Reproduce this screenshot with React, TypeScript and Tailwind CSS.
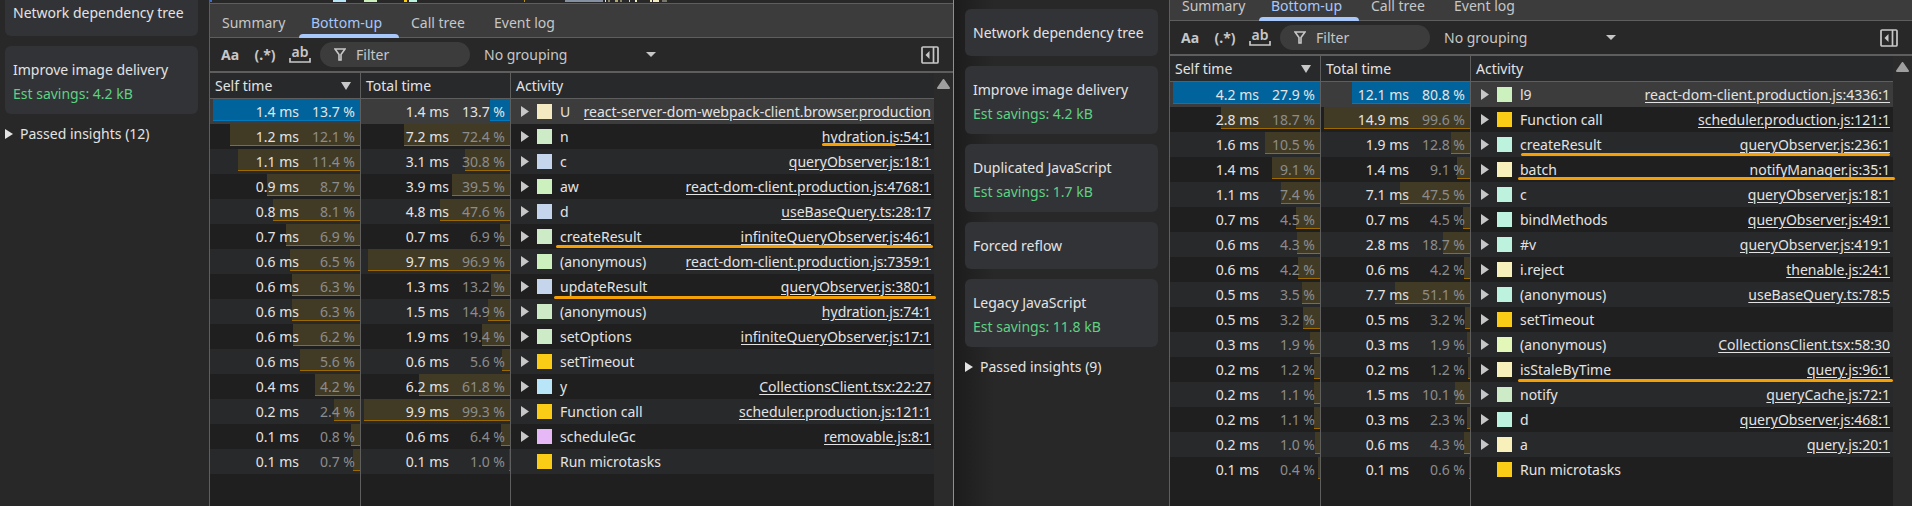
import * as React from "react";
import clsx from "clsx";

type Row = {
  self: string;
  selfPct: number;
  total: string;
  totalPct: number;
  color: string;
  name: string;
  link?: string;
  leaf?: boolean;
  mark?: string;
};

type Insight = {
  title: string;
  savings?: string;
};

const SAND = "bg-[#f3eac2]";
const CREAM = "bg-[#f8f0ba]";
const GREEN = "bg-[#cdebc7]";
const LIME = "bg-[#cdf1be]";
const PEAR = "bg-[#e3f8b8]";
const MINT = "bg-[#bdf2df]";
const BLUE = "bg-[#c5d5ec]";
const SKY = "bg-[#b8e6f8]";
const PINK = "bg-[#e6b8f6]";
const YELLOW = "bg-[#facc15]";

const beforeRows: Row[] = [
  { self: "1.4", selfPct: 13.7, total: "1.4", totalPct: 13.7, color: SAND, name: "U", link: "react-server-dom-webpack-client.browser.production" },
  { self: "1.2", selfPct: 12.1, total: "7.2", totalPct: 72.4, color: GREEN, name: "n", link: "hydration.js:54:1", mark: "right-[38px] w-[74px] bottom-[3px]" },
  { self: "1.1", selfPct: 11.4, total: "3.1", totalPct: 30.8, color: BLUE, name: "c", link: "queryObserver.js:18:1" },
  { self: "0.9", selfPct: 8.7, total: "3.9", totalPct: 39.5, color: LIME, name: "aw", link: "react-dom-client.production.js:4768:1" },
  { self: "0.8", selfPct: 8.1, total: "4.8", totalPct: 47.6, color: BLUE, name: "d", link: "useBaseQuery.ts:28:17" },
  { self: "0.7", selfPct: 6.9, total: "0.7", totalPct: 6.9, color: GREEN, name: "createResult", link: "infiniteQueryObserver.js:46:1", mark: "left-[45px] right-px bottom-px" },
  { self: "0.6", selfPct: 6.5, total: "9.7", totalPct: 96.9, color: LIME, name: "(anonymous)", link: "react-dom-client.production.js:7359:1" },
  { self: "0.6", selfPct: 6.3, total: "1.3", totalPct: 13.2, color: BLUE, name: "updateResult", link: "queryObserver.js:380:1", mark: "left-[43px] -right-[2px] bottom-0" },
  { self: "0.6", selfPct: 6.3, total: "1.5", totalPct: 14.9, color: GREEN, name: "(anonymous)", link: "hydration.js:74:1" },
  { self: "0.6", selfPct: 6.2, total: "1.9", totalPct: 19.4, color: GREEN, name: "setOptions", link: "infiniteQueryObserver.js:17:1" },
  { self: "0.6", selfPct: 5.6, total: "0.6", totalPct: 5.6, color: YELLOW, name: "setTimeout" },
  { self: "0.4", selfPct: 4.2, total: "6.2", totalPct: 61.8, color: SKY, name: "y", link: "CollectionsClient.tsx:22:27" },
  { self: "0.2", selfPct: 2.4, total: "9.9", totalPct: 99.3, color: YELLOW, name: "Function call", link: "scheduler.production.js:121:1" },
  { self: "0.1", selfPct: 0.8, total: "0.6", totalPct: 6.4, color: PINK, name: "scheduleGc", link: "removable.js:8:1" },
  { self: "0.1", selfPct: 0.7, total: "0.1", totalPct: 1.0, color: YELLOW, name: "Run microtasks", leaf: true },
];

const afterRows: Row[] = [
  { self: "4.2", selfPct: 27.9, total: "12.1", totalPct: 80.8, color: LIME, name: "l9", link: "react-dom-client.production.js:4336:1" },
  { self: "2.8", selfPct: 18.7, total: "14.9", totalPct: 99.6, color: YELLOW, name: "Function call", link: "scheduler.production.js:121:1" },
  { self: "1.6", selfPct: 10.5, total: "1.9", totalPct: 12.8, color: MINT, name: "createResult", link: "queryObserver.js:236:1", mark: "left-[50px] right-[3px] bottom-px" },
  { self: "1.4", selfPct: 9.1, total: "1.4", totalPct: 9.1, color: CREAM, name: "batch", link: "notifyManager.js:35:1", mark: "left-[47px] -right-[2px] bottom-[2px]" },
  { self: "1.1", selfPct: 7.4, total: "7.1", totalPct: 47.5, color: MINT, name: "c", link: "queryObserver.js:18:1" },
  { self: "0.7", selfPct: 4.5, total: "0.7", totalPct: 4.5, color: MINT, name: "bindMethods", link: "queryObserver.js:49:1" },
  { self: "0.6", selfPct: 4.3, total: "2.8", totalPct: 18.7, color: MINT, name: "#v", link: "queryObserver.js:419:1" },
  { self: "0.6", selfPct: 4.2, total: "0.6", totalPct: 4.2, color: CREAM, name: "i.reject", link: "thenable.js:24:1" },
  { self: "0.5", selfPct: 3.5, total: "7.7", totalPct: 51.1, color: MINT, name: "(anonymous)", link: "useBaseQuery.ts:78:5" },
  { self: "0.5", selfPct: 3.2, total: "0.5", totalPct: 3.2, color: YELLOW, name: "setTimeout" },
  { self: "0.3", selfPct: 1.9, total: "0.3", totalPct: 1.9, color: PEAR, name: "(anonymous)", link: "CollectionsClient.tsx:58:30" },
  { self: "0.2", selfPct: 1.2, total: "0.2", totalPct: 1.2, color: CREAM, name: "isStaleByTime", link: "query.js:96:1", mark: "left-[47px] right-0 bottom-0" },
  { self: "0.2", selfPct: 1.1, total: "1.5", totalPct: 10.1, color: GREEN, name: "notify", link: "queryCache.js:72:1" },
  { self: "0.2", selfPct: 1.1, total: "0.3", totalPct: 2.3, color: MINT, name: "d", link: "queryObserver.js:468:1" },
  { self: "0.2", selfPct: 1.0, total: "0.6", totalPct: 4.3, color: CREAM, name: "a", link: "query.js:20:1" },
  { self: "0.1", selfPct: 0.4, total: "0.1", totalPct: 0.6, color: YELLOW, name: "Run microtasks", leaf: true },
];

const beforeInsights: Insight[] = [
  { title: "Network dependency tree" },
  { title: "Improve image delivery", savings: "Est savings: 4.2 kB" },
];

const afterInsights: Insight[] = [
  { title: "Network dependency tree" },
  { title: "Improve image delivery", savings: "Est savings: 4.2 kB" },
  { title: "Duplicated JavaScript", savings: "Est savings: 1.7 kB" },
  { title: "Forced reflow" },
  { title: "Legacy JavaScript", savings: "Est savings: 11.8 kB" },
];

function Insights({ items, passed, className }: { items: Insight[]; passed: number; className?: string }) {
  return (
    <aside className={clsx("w-[209px] shrink-0 pl-[5px] pr-[11px]", className)}>
      <div className="flex flex-col gap-[10px]">
        {items.map((item) => (
          <article key={item.title} className="rounded-md bg-[#323337] px-2 pt-3 pb-[11px] leading-6 whitespace-nowrap">
            <h3>{item.title}</h3>
            {item.savings && <p className="-mb-[3px] text-[#5fd183]">{item.savings}</p>}
          </article>
        ))}
      </div>
      <details className="mt-2">
        <summary className="flex list-none items-center gap-[7px] leading-6">
          <svg className="h-[10px] w-2" viewBox="0 0 8 10" fill="currentColor" aria-hidden="true">
            <path d="M0 0 8 5 0 10z" />
          </svg>
          Passed insights ({passed})
        </summary>
      </details>
    </aside>
  );
}

function Tabs() {
  const tab = "flex h-full items-center pt-1 pl-3";
  return (
    <div role="tablist" className="flex h-[34px] border-b border-[#5e5e5e] bg-[#3c3c3c] text-[#c7c7c7]">
      <button role="tab" className={clsx(tab, "w-[89px]")}>Summary</button>
      <button role="tab" aria-selected="true" className={clsx(tab, "relative w-[100px] text-[#a8c7fa]")}>
        Bottom-up
        <span className="absolute inset-x-0 -bottom-px h-1 rounded-t bg-[#a8c7fa]" />
      </button>
      <button role="tab" className={clsx(tab, "w-[83px]")}>Call tree</button>
      <button role="tab" className={tab}>Event log</button>
    </div>
  );
}

function Toolbar({ id }: { id: string }) {
  return (
    <div className="flex h-[35px] items-center border-b-2 border-[#5e5e5e] bg-[#282828] pl-[11px] pr-[14px] text-[#c7c7c7]">
      <button aria-label="Match case" className="w-[20px] text-left text-[14px] leading-6 font-bold">Aa</button>
      <button aria-label="Use regular expression" className="ml-3 w-[24px] text-center text-[14px] leading-6 font-bold">(.*)</button>
      <button aria-label="Match whole word" className="ml-3 flex w-[22px] flex-col items-center text-[14px] leading-3 font-semibold">
        ab
        <svg className="h-[5px] w-[22px]" viewBox="0 0 22 5" fill="none" stroke="currentColor" strokeWidth="1.7" aria-hidden="true">
          <path d="M1 0v4h20V0" />
        </svg>
      </button>
      <label htmlFor={`${id}-filter`} className="ml-[9px] flex h-[25px] w-[150px] items-center gap-[10px] rounded-full bg-[#3c3c3c] pl-[14px]">
        <svg className="h-[13px] w-3 shrink-0" viewBox="0 0 12 13" fill="none" stroke="currentColor" strokeWidth="1.6" aria-hidden="true">
          <path d="M1 1h10L7 6.6V12H5V6.6z" />
        </svg>
        <input id={`${id}-filter`} placeholder="Filter" className="w-full min-w-0 bg-transparent placeholder:text-[#c7c7c7] focus:outline-none" />
      </label>
      <div className="relative ml-[14px] w-[174px]">
        <select aria-label="Grouping" className="w-full appearance-none bg-transparent focus:outline-none">
          <option>No grouping</option>
        </select>
        <svg className="pointer-events-none absolute top-2 right-[2px] h-[5px] w-[10px]" viewBox="0 0 10 5" fill="currentColor" aria-hidden="true">
          <path d="M0 0h10L5 5z" />
        </svg>
      </div>
      <button aria-label="Show heaviest stack" className="ml-auto">
        <svg className="h-[18px] w-[18px]" viewBox="0 0 18 18" fill="none" stroke="currentColor" strokeWidth="1.7" aria-hidden="true">
          <rect x="1" y="1" width="16" height="16" rx="1" />
          <path d="M12.500 1v16" strokeWidth="1.7" />
          <path d="M8.500 5v8L4.500 9z" fill="currentColor" stroke="none" />
        </svg>
      </button>
    </div>
  );
}

function TimeCell({ value, pct, max, selected }: { value: string; pct: number; max: number; selected: boolean }) {
  return (
    <td className="border-r border-[#5e5e5e] p-0">
      <div className="grid h-[25px]">
        <span
          className={clsx(
            "col-start-1 row-start-1 h-[22px] justify-self-end border-b",
            selected ? "border-[#0079bd] bg-[#00639b]" : "border-[#9c6a00] bg-[#413b26]"
          )}
          style={{ width: `${(pct / max) * 98}%` }}
        />
        <span className="col-start-1 row-start-1 flex justify-end pr-[5px] leading-[25px]">
          <span>{value} ms</span>
          <span className={clsx("w-14 text-right", !selected && "text-[#8c8c8c]")}>{pct.toFixed(1)} %</span>
        </span>
      </div>
    </td>
  );
}

function CallTable({ rows }: { rows: Row[] }) {
  const maxSelf = rows[0].selfPct;
  const maxTotal = 99.6;

  return (
    <div className="flex flex-1 bg-[#1f1f1f]">
      <div className="flex min-w-0 flex-1 flex-col">
        <table className="w-full table-fixed border-separate border-spacing-0">
          <thead>
            <tr className="h-[26px] bg-[#28292b] text-left leading-[25px]">
              <th className="w-[151px] border-r border-b border-[#5e5e5e] p-0 font-normal" aria-sort="descending">
                <div className="flex items-center justify-between pr-[9px] pl-[5px]">
                  Self time
                  <svg className="h-2 w-[10px] text-[#c7c7c7]" viewBox="0 0 10 8" fill="currentColor" aria-hidden="true">
                    <path d="M0 0h10L5 8z" />
                  </svg>
                </div>
              </th>
              <th className="w-[150px] border-r border-b border-[#5e5e5e] p-0 pl-[5px] font-normal">Total time</th>
              <th className="border-b border-[#5e5e5e] p-0 pl-[5px] font-normal">Activity</th>
            </tr>
          </thead>
          <tbody>
            {rows.map((row, i) => (
              <tr key={i} className={clsx(i === 0 ? "bg-[#3c3c3c]" : "odd:bg-[#28292b]")}>
                <TimeCell value={row.self} pct={row.selfPct} max={maxSelf} selected={i === 0} />
                <TimeCell value={row.total} pct={row.totalPct} max={maxTotal} selected={i === 0} />
                <td className="p-0">
                  <div className="relative flex h-[25px] items-center pr-[3px] pl-[10px] leading-[25px] whitespace-nowrap">
                    <svg className={clsx("h-[11px] w-2 shrink-0 text-[#c7c7c7]", row.leaf && "invisible")} viewBox="0 0 8 11" fill="currentColor" aria-hidden="true">
                      <path d="M0 0 8 5.500 0 11z" />
                    </svg>
                    <span className={clsx("mr-2 ml-2 size-[15px] shrink-0", row.color)} />
                    <span className="mr-[6px]">{row.name}</span>
                    {row.link && (
                      <a href="#" className="ml-auto min-w-0 overflow-hidden underline underline-offset-2">
                        {row.link}
                      </a>
                    )}
                    {row.mark && <span className={clsx("absolute z-10 h-[3px] rounded-full bg-[#f5a005]", row.mark)} />}
                  </div>
                </td>
              </tr>
            ))}
          </tbody>
        </table>
        {/* column rules carry on below the last row */}
        <div className="flex flex-1">
          <div className="w-[151px] border-r border-[#5e5e5e]" />
          <div className="w-[150px] border-r border-[#5e5e5e]" />
        </div>
      </div>
      <div className="flex w-[19px] shrink-0 justify-center bg-[#2b2b2b] pt-[6px]">
        <svg className="h-[10px] w-[13px] text-[#9f9f9f]" viewBox="0 0 13 10" fill="currentColor" stroke="currentColor" strokeWidth="2" strokeLinejoin="round" aria-hidden="true">
          <path d="M6.500 1 12 9H1z" />
        </svg>
      </div>
    </div>
  );
}

function FlameStrip() {
  return (
    <svg className="h-[3px] w-full shrink-0 bg-[#282828]" aria-hidden="true">
      <g shapeRendering="crispEdges">
        <rect width="2" height="2" fill="#3b6fd4" />
        <rect x="123" width="13" height="2" fill="#b8e6f8" />
        <rect x="154" width="13" height="2" fill="#cdf1be" />
        <rect x="194" width="3" height="2" fill="#facc15" />
        <rect x="199" width="8" height="2" fill="#bdf2df" />
        <rect x="314" width="1" height="2" fill="#b8941a" />
        <rect x="355" width="38" height="2" fill="#8590a3" />
        <rect x="395" width="1" height="2" fill="#f3eac2" />
        <rect x="398" width="2" height="2" fill="#8a8466" />
        <rect x="405" width="3" height="2" fill="#b5a76a" />
        <rect x="410" width="2" height="2" fill="#8a8466" />
        <rect x="419" width="1" height="2" fill="#c5d5ec" />
        <rect x="425" width="2" height="2" fill="#f3eac2" />
        <rect x="440" width="2" height="2" fill="#f3eac2" />
        <rect x="443" width="6" height="2" fill="#f3eac2" />
        <rect x="452" width="5" height="2" fill="#77756a" />
      </g>
    </svg>
  );
}

function BottomUp({ id, rows, className }: { id: string; rows: Row[]; className?: string }) {
  return (
    <main className={clsx("flex min-w-0 flex-1 flex-col border-l border-[#5e5e5e]", className)}>
      <FlameStrip />
      <div className="border-t border-[#5e5e5e]" />
      <Tabs />
      <Toolbar id={id} />
      <CallTable rows={rows} />
    </main>
  );
}

export default function App() {
  return (
    <div className="grid min-h-screen grid-cols-[954fr_958fr] overflow-hidden bg-[#282828] font-['Noto_Sans','Open_Sans',sans-serif] text-[14px] text-[#e3e3e3]">
      <section className="flex min-w-0 border-r border-[#8f8f8f]">
        <Insights items={beforeInsights} passed={12} className="-mt-[11px]" />
        <BottomUp id="before" rows={beforeRows} />
      </section>
      <section className="flex min-w-0 bg-linear-to-r from-[#1c1c1c] to-[#282828] to-[40px] pl-[6px]">
        <Insights items={afterInsights} passed={9} className="mt-[9px]" />
        <BottomUp id="after" rows={afterRows} className="-mt-[17px]" />
      </section>
    </div>
  );
}
